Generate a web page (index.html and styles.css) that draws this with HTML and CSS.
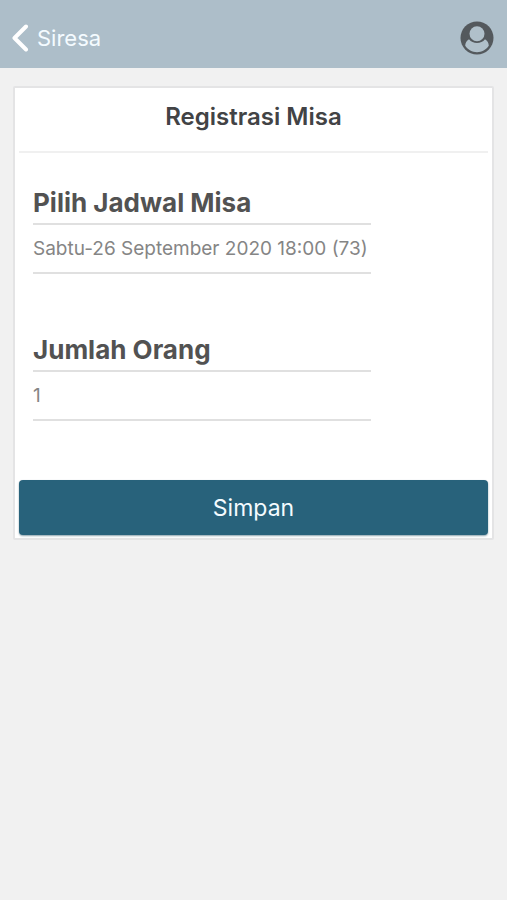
FILE: index.html
```html
<!DOCTYPE html>
<html lang="id">
<head>
<meta charset="utf-8">
<meta name="viewport" content="width=device-width, initial-scale=1">
<title>Registrasi Misa</title>
<link rel="stylesheet" href="styles.css">
</head>
<body>
<header class="topbar">
  <a class="back" href="#">
    <svg class="back-icon" viewBox="0 0 18 28" aria-hidden="true"><path d="M15 2.500 3.500 14l11.500 11.500"/></svg>
    <span>Siresa</span>
  </a>
  <button class="profile" type="button" aria-label="Profil">
    <svg class="profile-icon" viewBox="0 0 34 34" aria-hidden="true">
      <circle class="profile-disc" cx="17" cy="17" r="16.500"/>
      <path class="profile-body" d="M9 18.200C6.500 19.500 5.300 22 5.200 24.800C8 29 12.200 31.200 17 31.200S26 29 28.800 24.800C28.700 22 27.500 19.500 25 18.200C23 20.800 20.200 22 17 22S11 20.800 9 18.200Z"/>
      <circle class="profile-head" cx="17" cy="12.800" r="7.500"/>
    </svg>
  </button>
</header>
<main class="page">
  <form class="card">
    <h1 class="title">Registrasi Misa</h1>
    <div class="fields">
      <div class="field">
        <label class="label" for="jadwal">Pilih Jadwal Misa</label>
        <select class="control" id="jadwal"><option>Sabtu-26 September 2020 18:00 (73)</option></select>
      </div>
      <div class="field">
        <label class="label" for="jumlah">Jumlah Orang</label>
        <select class="control" id="jumlah"><option>1</option></select>
      </div>
    </div>
    <button class="submit" type="button">Simpan</button>
  </form>
</main>
</body>
</html>
```
FILE: styles.css
```css
* {
  box-sizing: border-box;
}

body {
  margin: 0;
  background: #f1f1f1;
  color: #525252;
  font-family: Inter, "Liberation Sans", sans-serif;
}

.topbar {
  display: flex;
  align-items: center;
  justify-content: space-between;
  height: 68px;
  padding: 8px 13px 0 11px;
  background: #adbec9;
}

.back {
  display: flex;
  align-items: center;
  gap: 8px;
  color: #f4fbff;
  font-size: 22px;
  line-height: 28px;
  text-decoration: none;
}

.back-icon {
  width: 18px;
  height: 28px;
  fill: none;
  stroke: #fff;
  stroke-width: 4;
  stroke-linecap: round;
  stroke-linejoin: round;
}

.profile {
  display: flex;
  padding: 0;
  border: 0;
  background: none;
}

.profile-icon {
  width: 34px;
  height: 34px;
}

.profile-disc {
  fill: #54595d;
}

.profile-head,
.profile-body {
  fill: #b0c0ca;
}

.page {
  padding: 18px 13px;
}

.card {
  padding: 0 4px 3px;
  border: 2px solid #e4e4e5;
  border-radius: 2px;
  background: #fff;
}

.title {
  margin: 0;
  padding: 14px 0 19px;
  border-bottom: 2px solid #f0f0f0;
  color: #424345;
  font-size: 24px;
  font-weight: 600;
  line-height: 30px;
  text-align: center;
}

.fields {
  display: grid;
  gap: 60px;
  width: 75%;
  padding: 34px 0 59px 14px;
}

.field {
  display: grid;
  gap: 4px;
}

.label {
  font-size: 26px;
  font-weight: 700;
  line-height: 32px;
}

.control {
  appearance: none;
  width: 100%;
  height: 51px;
  padding: 0;
  border: solid #e0e0e0;
  border-width: 2px 0;
  border-radius: 0;
  background: none;
  color: #858585;
  font-family: inherit;
  font-size: 19px;
}

.submit {
  display: block;
  width: 100%;
  height: 55px;
  padding: 0;
  border: 0;
  border-radius: 4px;
  background: #28627b;
  box-shadow: 0 1px 2px #8ba2ad;
  color: #f4fbff;
  font-family: inherit;
  font-size: 23px;
}
```
